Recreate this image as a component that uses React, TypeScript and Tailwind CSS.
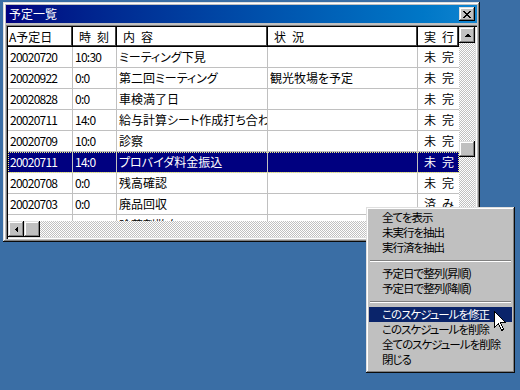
type Row = {
  date: string;
  time: string;
  title: string;
  note: string;
  state: string;
  selected?: boolean;
};

const rows: Row[] = [
  { date: '20020720', time: '10:30', title: 'ミーティング下見', note: '', state: '未\u2002完' },
  { date: '20020922', time: '0:0', title: '第二回ミーティング', note: '観光牧場を予定', state: '未\u2002完' },
  { date: '20020828', time: '0:0', title: '車検満了日', note: '', state: '未\u2002完' },
  { date: '20020711', time: '14:0', title: '給与計算シート作成打ち合わせ', note: '', state: '未\u2002完' },
  { date: '20020709', time: '10:0', title: '診察', note: '', state: '未\u2002完' },
  { date: '20020711', time: '14:0', title: 'プロバイダ料金振込', note: '', state: '未\u2002完', selected: true },
  { date: '20020708', time: '0:0', title: '残高確認', note: '', state: '未\u2002完' },
  { date: '20020703', time: '0:0', title: '廃品回収', note: '', state: '済\u2002み' },
  { date: '20020701', time: '0:0', title: '除草剤散布', note: '', state: '済\u2002み' },
];

const menuItems: (string | null)[] = [
  '全てを表示',
  '未実行を抽出',
  '実行済を抽出',
  null,
  '予定日で整列(昇順)',
  '予定日で整列(降順)',
  null,
  'このスケジュールを修正',
  'このスケジュールを削除',
  '全てのスケジュールを削除',
  '閉じる',
];

const raised =
  'bg-[#c0c0c0] shadow-[inset_-1px_-1px_#000,inset_1px_1px_#dfdfdf,inset_-2px_-2px_#808080,inset_2px_2px_#fff]';

const checker =
  'bg-[repeating-conic-gradient(#c0c0c0_0_25%,#fff_0_50%)] bg-[length:2px_2px]';

function HeaderCell({ label, w, pl }: { label: string; w: string; pl: string }) {
  return (
    <div
      className={`${w} ${pl} h-[20px] shrink-0 bg-white text-[12px] leading-[19px] whitespace-nowrap overflow-hidden shadow-[inset_-1px_-1px_#000,inset_-2px_-2px_#404040]`}
    >
      {label}
    </div>
  );
}

function ListRow({ row }: { row: Row }) {
  const cell = 'h-full shrink-0 border-r border-[#c0c0c0] whitespace-nowrap overflow-hidden';
  return (
    <div
      className={`flex h-[21px] border-b border-[#c0c0c0] text-[12px] leading-[20px] ${
        row.selected
          ? 'bg-[#000080] text-white outline-1 outline-dotted outline-[#f0f080] -outline-offset-1'
          : 'text-black'
      }`}
    >
      <div className={`${cell} w-[65px] pl-[2px] tracking-[-0.75px]`}>{row.date}</div>
      <div className={`${cell} w-[44px] pl-[2px] tracking-[-0.75px]`}>{row.time}</div>
      <div className={`${cell} w-[151px] pl-[2px]`}>{row.title}</div>
      <div className={`${cell} w-[150px] pl-[2px]`}>{row.note}</div>
      <div className="h-full w-[41px] shrink-0 pl-[6px] whitespace-nowrap overflow-hidden">{row.state}</div>
    </div>
  );
}

export default function App() {
  return (
    <div className="relative w-[520px] h-[390px] overflow-hidden bg-[#3a6ea5] font-['Noto_Sans_CJK_JP','Liberation_Sans',sans-serif] [font-feature-settings:'palt']">
      {/* window */}
      <div className="ml-[3px] mt-[2px] w-[477px] h-[240px] p-[3px] flex flex-col bg-[#c0c0c0] shadow-[inset_-1px_-1px_#0a0a0a,inset_1px_1px_#dfdfdf,inset_-2px_-2px_#808080,inset_2px_2px_#fff]">
        <div className="h-[18px] shrink-0 flex items-center justify-between pl-[3px] pr-[2px] bg-linear-to-r from-[#000080] to-[#1084d0]">
          <span className="text-white text-[12px] leading-none">予定一覧</span>
          <button className={`${raised} w-[16px] h-[14px] flex items-center justify-center`}>
            <svg width="8" height="7" viewBox="0 0 8 7" shapeRendering="crispEdges">
              <path
                d="M0 0h2v1h-2zM6 0h2v1h-2zM1 1h2v1h-2zM5 1h2v1h-2zM2 2h4v1h-4zM3 3h2v1h-2zM2 4h4v1h-4zM1 5h2v1h-2zM5 5h2v1h-2zM0 6h2v1h-2zM6 6h2v1h-2z"
                fill="#000"
              />
            </svg>
          </button>
        </div>

        {/* list view */}
        <div className="mt-[2px] flex-1 min-h-0 flex p-[2px] bg-white shadow-[inset_1px_1px_#808080,inset_2px_2px_#000,inset_-1px_-1px_#fff,inset_-2px_-2px_#dfdfdf]">
          <div className="flex-1 min-w-0 flex flex-col">
            <div className="flex shrink-0">
              <HeaderCell label="A予定日" w="w-[65px]" pl="pl-[1px]" />
              <HeaderCell label={'時\u2002刻'} w="w-[44px]" pl="pl-[6px]" />
              <HeaderCell label={'内\u2002容'} w="w-[151px]" pl="pl-[6px]" />
              <HeaderCell label={'状\u2002況'} w="w-[150px]" pl="pl-[6px]" />
              <HeaderCell label={'実\u2002行'} w="w-[41px]" pl="pl-[6px]" />
            </div>
            <div className="flex-1 min-h-0 overflow-hidden">
              {rows.map((r, i) => (
                <ListRow key={i} row={r} />
              ))}
            </div>
            <div className={`h-[16px] shrink-0 flex ${checker}`}>
              <div className={`${raised} w-[16px] h-[16px] flex items-center justify-center`}>
                <svg width="4" height="7" viewBox="0 0 4 7" shapeRendering="crispEdges">
                  <path d="M4 0v7L0.5 3.5z" fill="#000" />
                </svg>
              </div>
              <div className={`${raised} w-[16px] h-[16px]`} />
            </div>
          </div>
          <div className={`w-[16px] shrink-0 flex flex-col ${checker}`}>
            <div className={`${raised} w-[16px] h-[16px] flex items-center justify-center`}>
              <svg width="7" height="4" viewBox="0 0 7 4" shapeRendering="crispEdges">
                <path d="M3.5 0.5L7 4H0z" fill="#000" />
              </svg>
            </div>
            <div className="h-[98px]" />
            <div className={`${raised} w-[16px] h-[16px]`} />
            <div className="flex-1" />
            <div className={`${raised} w-[16px] h-[16px]`} />
          </div>
        </div>
      </div>

      {/* context menu */}
      <div className="absolute left-[366px] top-[207px] w-[149px] h-[166px] p-[3px] bg-[#c0c0c0] shadow-[inset_-1px_-1px_#0a0a0a,inset_1px_1px_#dfdfdf,inset_-2px_-2px_#808080,inset_2px_2px_#fff]">
        {menuItems.map((item, i) =>
          item === null ? (
            <div key={i} className="h-[11px] flex items-center px-[1px]">
              <div className="w-full h-[2px] border-t border-[#808080] border-b border-b-white" />
            </div>
          ) : (
            <div
              key={i}
              className={`h-[15px] pl-[13px] text-[11.5px] leading-[15px] tracking-[-1px] whitespace-nowrap ${
                i === 7 ? 'bg-[#0a246a] text-white' : 'text-black'
              }`}
            >
              {item}
            </div>
          )
        )}
      </div>

      {/* mouse pointer */}
      <svg
        className="absolute left-[494px] top-[311px]"
        width="13"
        height="21"
        viewBox="0 0 13 21"
        shapeRendering="crispEdges"
      >
        <path
          d="M0.5 0.5V16.5L4.5 12.5L7.5 19.5L9.5 18.5L6.5 11.5H11.5Z"
          fill="#fff"
          stroke="#000"
          strokeWidth="1"
        />
      </svg>
    </div>
  );
}
